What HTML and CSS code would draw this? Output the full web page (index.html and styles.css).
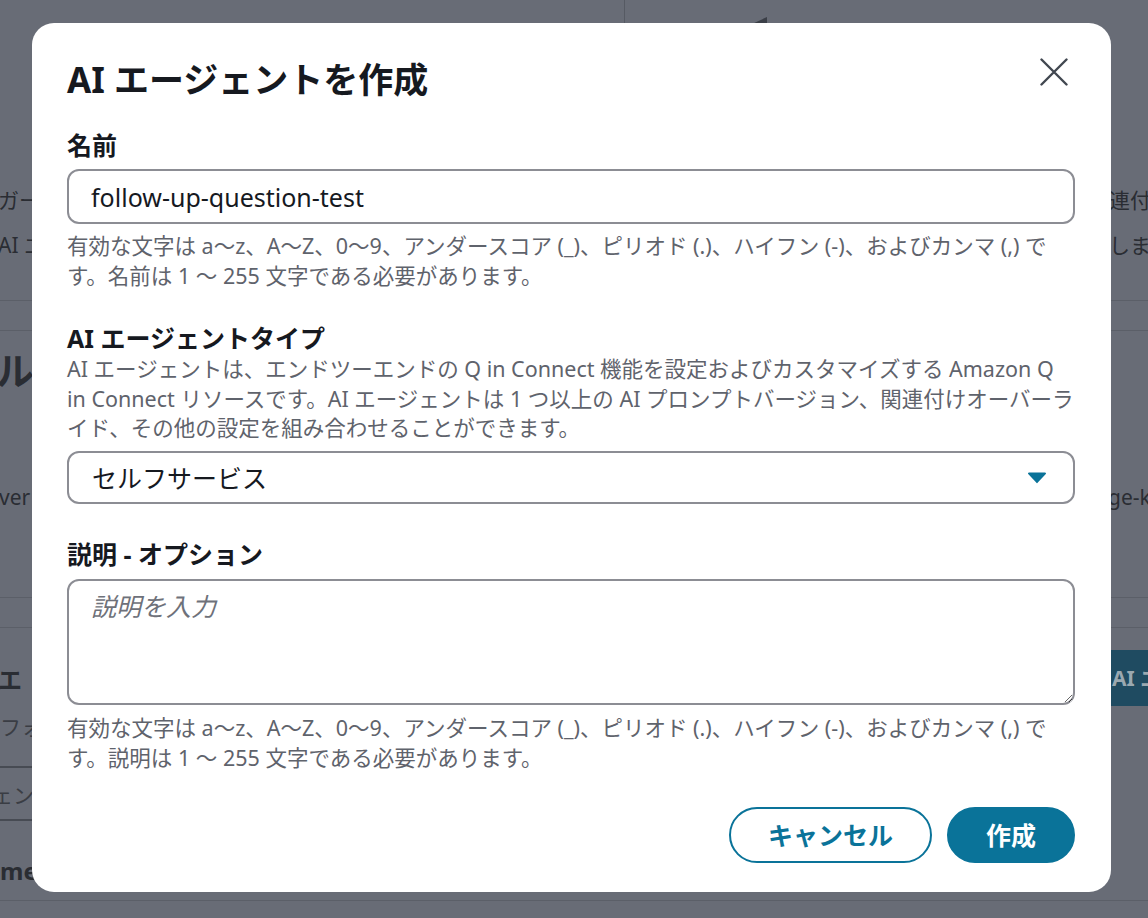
FILE: index.html
```html
<!DOCTYPE html>
<html lang="ja">
<head>
<meta charset="utf-8">
<title>AI エージェントを作成</title>
<link rel="stylesheet" href="styles.css">
</head>
<body>
<div class="page">
  <section class="bg-top">
    <div class="bg-top-left">
      <div class="bg-text-lines">
        <span class="frag-left">ガードレール</span>
        <span class="frag-left">AI エージェント</span>
      </div>
    </div>
    <div class="bg-top-right">
      <span class="bg-tri"></span>
      <div class="bg-text-lines right">
        <span class="frag-right">関連付け</span>
        <span class="frag-right">てしまいます</span>
      </div>
    </div>
  </section>
  <div class="bg-band"></div>
  <section class="bg-mid">
    <div class="bg-heading">ル</div>
    <div class="bg-row">
      <span class="frag-left ver">ver</span>
      <span class="frag-right gek">ge-kb</span>
    </div>
  </section>
  <div class="bg-band"></div>
  <section class="bg-low">
    <div class="bg-row bg-row-head">
      <span class="frag-left bold">エ</span>
      <span class="bg-btn">AI エージェント</span>
    </div>
    <div class="bg-cell">フォ</div>
    <div class="bg-cell cell2">ェン</div>
    <div class="bg-cell cell3 bold">me</div>
  </section>
</div>

<div class="overlay">
  <div class="modal" role="dialog" aria-labelledby="modal-title">
    <div class="modal-head">
      <h1 id="modal-title" class="modal-title">AI エージェントを作成</h1>
      <button class="close" aria-label="閉じる">
        <svg viewBox="0 0 28 28" width="28" height="28"><path d="M1.5 1.5 L26.5 26.5 M26.5 1.5 L1.5 26.5" stroke="#414750" stroke-width="2.4" stroke-linecap="round" fill="none"/></svg>
      </button>
    </div>

    <div class="field field-name">
      <div class="label">名前</div>
      <input class="control text-input" type="text" value="follow-up-question-test">
      <p class="hint">有効な文字は a〜z、A〜Z、0〜9、アンダースコア (_)、ピリオド (.)、ハイフン (-)、およびカンマ (,) です。名前は 1 〜 255 文字である必要があります。</p>
    </div>

    <div class="field field-type">
      <div class="label">AI エージェントタイプ</div>
      <p class="hint desc">AI エージェントは、エンドツーエンドの Q in Connect 機能を設定およびカスタマイズする Amazon Q in Connect リソースです。AI エージェントは 1 つ以上の AI プロンプトバージョン、関連付けオーバーライド、その他の設定を組み合わせることができます。</p>
      <div class="control select">
        <span>セルフサービス</span>
        <svg class="caret" viewBox="0 0 20 13" width="20" height="13"><path d="M2 1.5 H18 a1 1 0 0 1 0.8 1.6 L10.8 11.6 a1 1 0 0 1 -1.6 0 L1.2 3.1 A1 1 0 0 1 2 1.5 Z" fill="#0a7399"/></svg>
      </div>
    </div>

    <div class="field field-desc">
      <div class="label">説明 - オプション</div>
      <textarea class="control textarea" placeholder="説明を入力"></textarea>
      <p class="hint hint-desc">有効な文字は a〜z、A〜Z、0〜9、アンダースコア (_)、ピリオド (.)、ハイフン (-)、およびカンマ (,) です。説明は 1 〜 255 文字である必要があります。</p>
    </div>

    <div class="modal-foot">
      <button class="btn btn-secondary">キャンセル</button>
      <button class="btn btn-primary">作成</button>
    </div>
  </div>
</div>
</body>
</html>
```

FILE: styles.css
```css
html, body {
  margin: 0;
  padding: 0;
}

body {
  width: 1148px;
  height: 918px;
  overflow: hidden;
  font-family: "Noto Sans", "Noto Sans CJK JP", sans-serif;
  background: #686c76;
  color: #2a2d33;
}

/* ---------- dimmed background page ---------- */
.page {
  width: 1148px;
  height: 918px;
  overflow: hidden;
  background: #686c76;
  font-size: 21px;
  color: #2a2d33;
}

.bg-top {
  display: grid;
  grid-template-columns: 625px 1fr;
  height: 300px;
  border-bottom: 1px solid #5b5f68;
}

.bg-top-left {
  border-right: 1px solid #565a63;
}

.bg-top-right {
  display: flex;
  flex-direction: column;
}

.bg-tri {
  display: block;
  width: 15px;
  height: 7px;
  margin: 17px 0 0 127px;
  background: #3b3f47;
  clip-path: polygon(0 100%, 100% 0, 100% 100%);
}

.bg-text-lines {
  display: flex;
  flex-direction: column;
  padding-top: 178px;
  line-height: 45px;
  white-space: nowrap;
}

.bg-text-lines.right {
  padding-top: 154px;
  align-items: flex-end;
}

.frag-left {
  margin-left: -2px;
  white-space: nowrap;
}

.frag-right {
  display: block;
  width: 60px;
  white-space: nowrap;
  overflow: visible;
}

.bg-band {
  height: 29px;
  border-bottom: 1px solid #5b5f68;
}

.bg-mid {
  display: flow-root;
  height: 251px;
  padding-top: 15px;
  border-bottom: 1px solid #5b5f68;
}

.bg-heading {
  margin-left: -4px;
  font-size: 38px;
  font-weight: 700;
  line-height: 48px;
}

.bg-row {
  display: flex;
  justify-content: space-between;
  align-items: center;
  white-space: nowrap;
}

.bg-mid .bg-row {
  margin-top: 88px;
  line-height: 30px;
}

.ver {
  margin-left: -1px;
}

.gek {
  width: 40px;
}

.bg-low {
  display: flow-root;
  padding-top: 22px;
  height: 250px;
  border-bottom: 1px solid #5b5f68;
}

.bg-row-head {
  height: 56px;
}

.bold {
  font-weight: 700;
  font-size: 24px;
}

.bg-btn {
  display: block;
  width: 36px;
  height: 56px;
  padding-left: 6px;
  line-height: 56px;
  background: #1f4b61;
  color: #9aa8b0;
  font-weight: 700;
  font-size: 21px;
  white-space: nowrap;
  overflow: hidden;
}

.bg-cell {
  width: 40px;
  height: 60px;
  line-height: 42px;
  color: #3a3d44;
  border-bottom: 2px solid #474b53;
  white-space: nowrap;
  overflow: hidden;
}

.cell2 {
  text-indent: -8px;
  height: 51px;
  line-height: 54px;
}

.cell3 {
  border-bottom: 0;
  height: 79px;
  line-height: 100px;
  color: #2a2d33;
}

/* ---------- modal ---------- */
.overlay {
  position: fixed;
  inset: 0;
  padding: 23px 37px 0 32px;
}

.modal {
  width: 1079px;
  box-sizing: border-box;
  background: #ffffff;
  border-radius: 22px;
  padding: 35px 36px 29px 35px;
  color: #16191f;
}

.modal-head {
  display: flex;
  justify-content: space-between;
  align-items: flex-start;
}

.modal-title {
  margin: 0;
  font-size: 35px;
  line-height: 44px;
  font-weight: 700;
  color: #16191f;
}

.close {
  width: 28px;
  height: 28px;
  margin: 0 7px 0 0;
  padding: 0;
  border: 0;
  background: none;
  display: flex;
}

.label {
  font-size: 25px;
  line-height: 30px;
  font-weight: 700;
  color: #16191f;
}

.hint {
  margin: 0;
  font-size: 21.5px;
  line-height: 29.5px;
  color: #5f636c;
}

.field-name {
  margin-top: 28px;
}

.field-type {
  margin-top: 33px;
}

.field-desc {
  margin-top: 35px;
}

.control {
  display: block;
  width: 100%;
  box-sizing: border-box;
  border: 2px solid #8c8d94;
  border-radius: 12px;
  background: #ffffff;
  font-family: "Noto Sans", "Noto Sans CJK JP", sans-serif;
  font-size: 25px;
  color: #16191f;
  outline: none;
}

.text-input {
  height: 55px;
  margin-top: 9px;
  padding: 0 22px;
}

.field-name .hint {
  margin-top: 7px;
}

.desc {
  margin-top: 1px;
}

.select {
  display: flex;
  align-items: center;
  justify-content: space-between;
  height: 53px;
  margin-top: 8px;
  padding: 0 26px 0 23px;
}

.caret {
  display: block;
}

.textarea {
  height: 126px;
  margin-top: 10.5px;
  padding: 10px 22px;
  line-height: 30px;
  resize: both;
}

.textarea::placeholder {
  color: #6e717a;
  font-style: italic;
}

.hint-desc {
  margin-top: 8px;
}

.modal-foot {
  display: flex;
  justify-content: flex-end;
  gap: 15px;
  margin-top: 35px;
}

.btn {
  height: 56px;
  padding: 0 37px;
  border-radius: 28px;
  border: 2px solid #0a7399;
  font-family: "Noto Sans", "Noto Sans CJK JP", sans-serif;
  font-size: 25px;
  font-weight: 700;
  line-height: 1;
}

.btn-secondary {
  background: #ffffff;
  color: #0a7399;
}

.btn-primary {
  background: #0a7399;
  color: #ffffff;
}
```
